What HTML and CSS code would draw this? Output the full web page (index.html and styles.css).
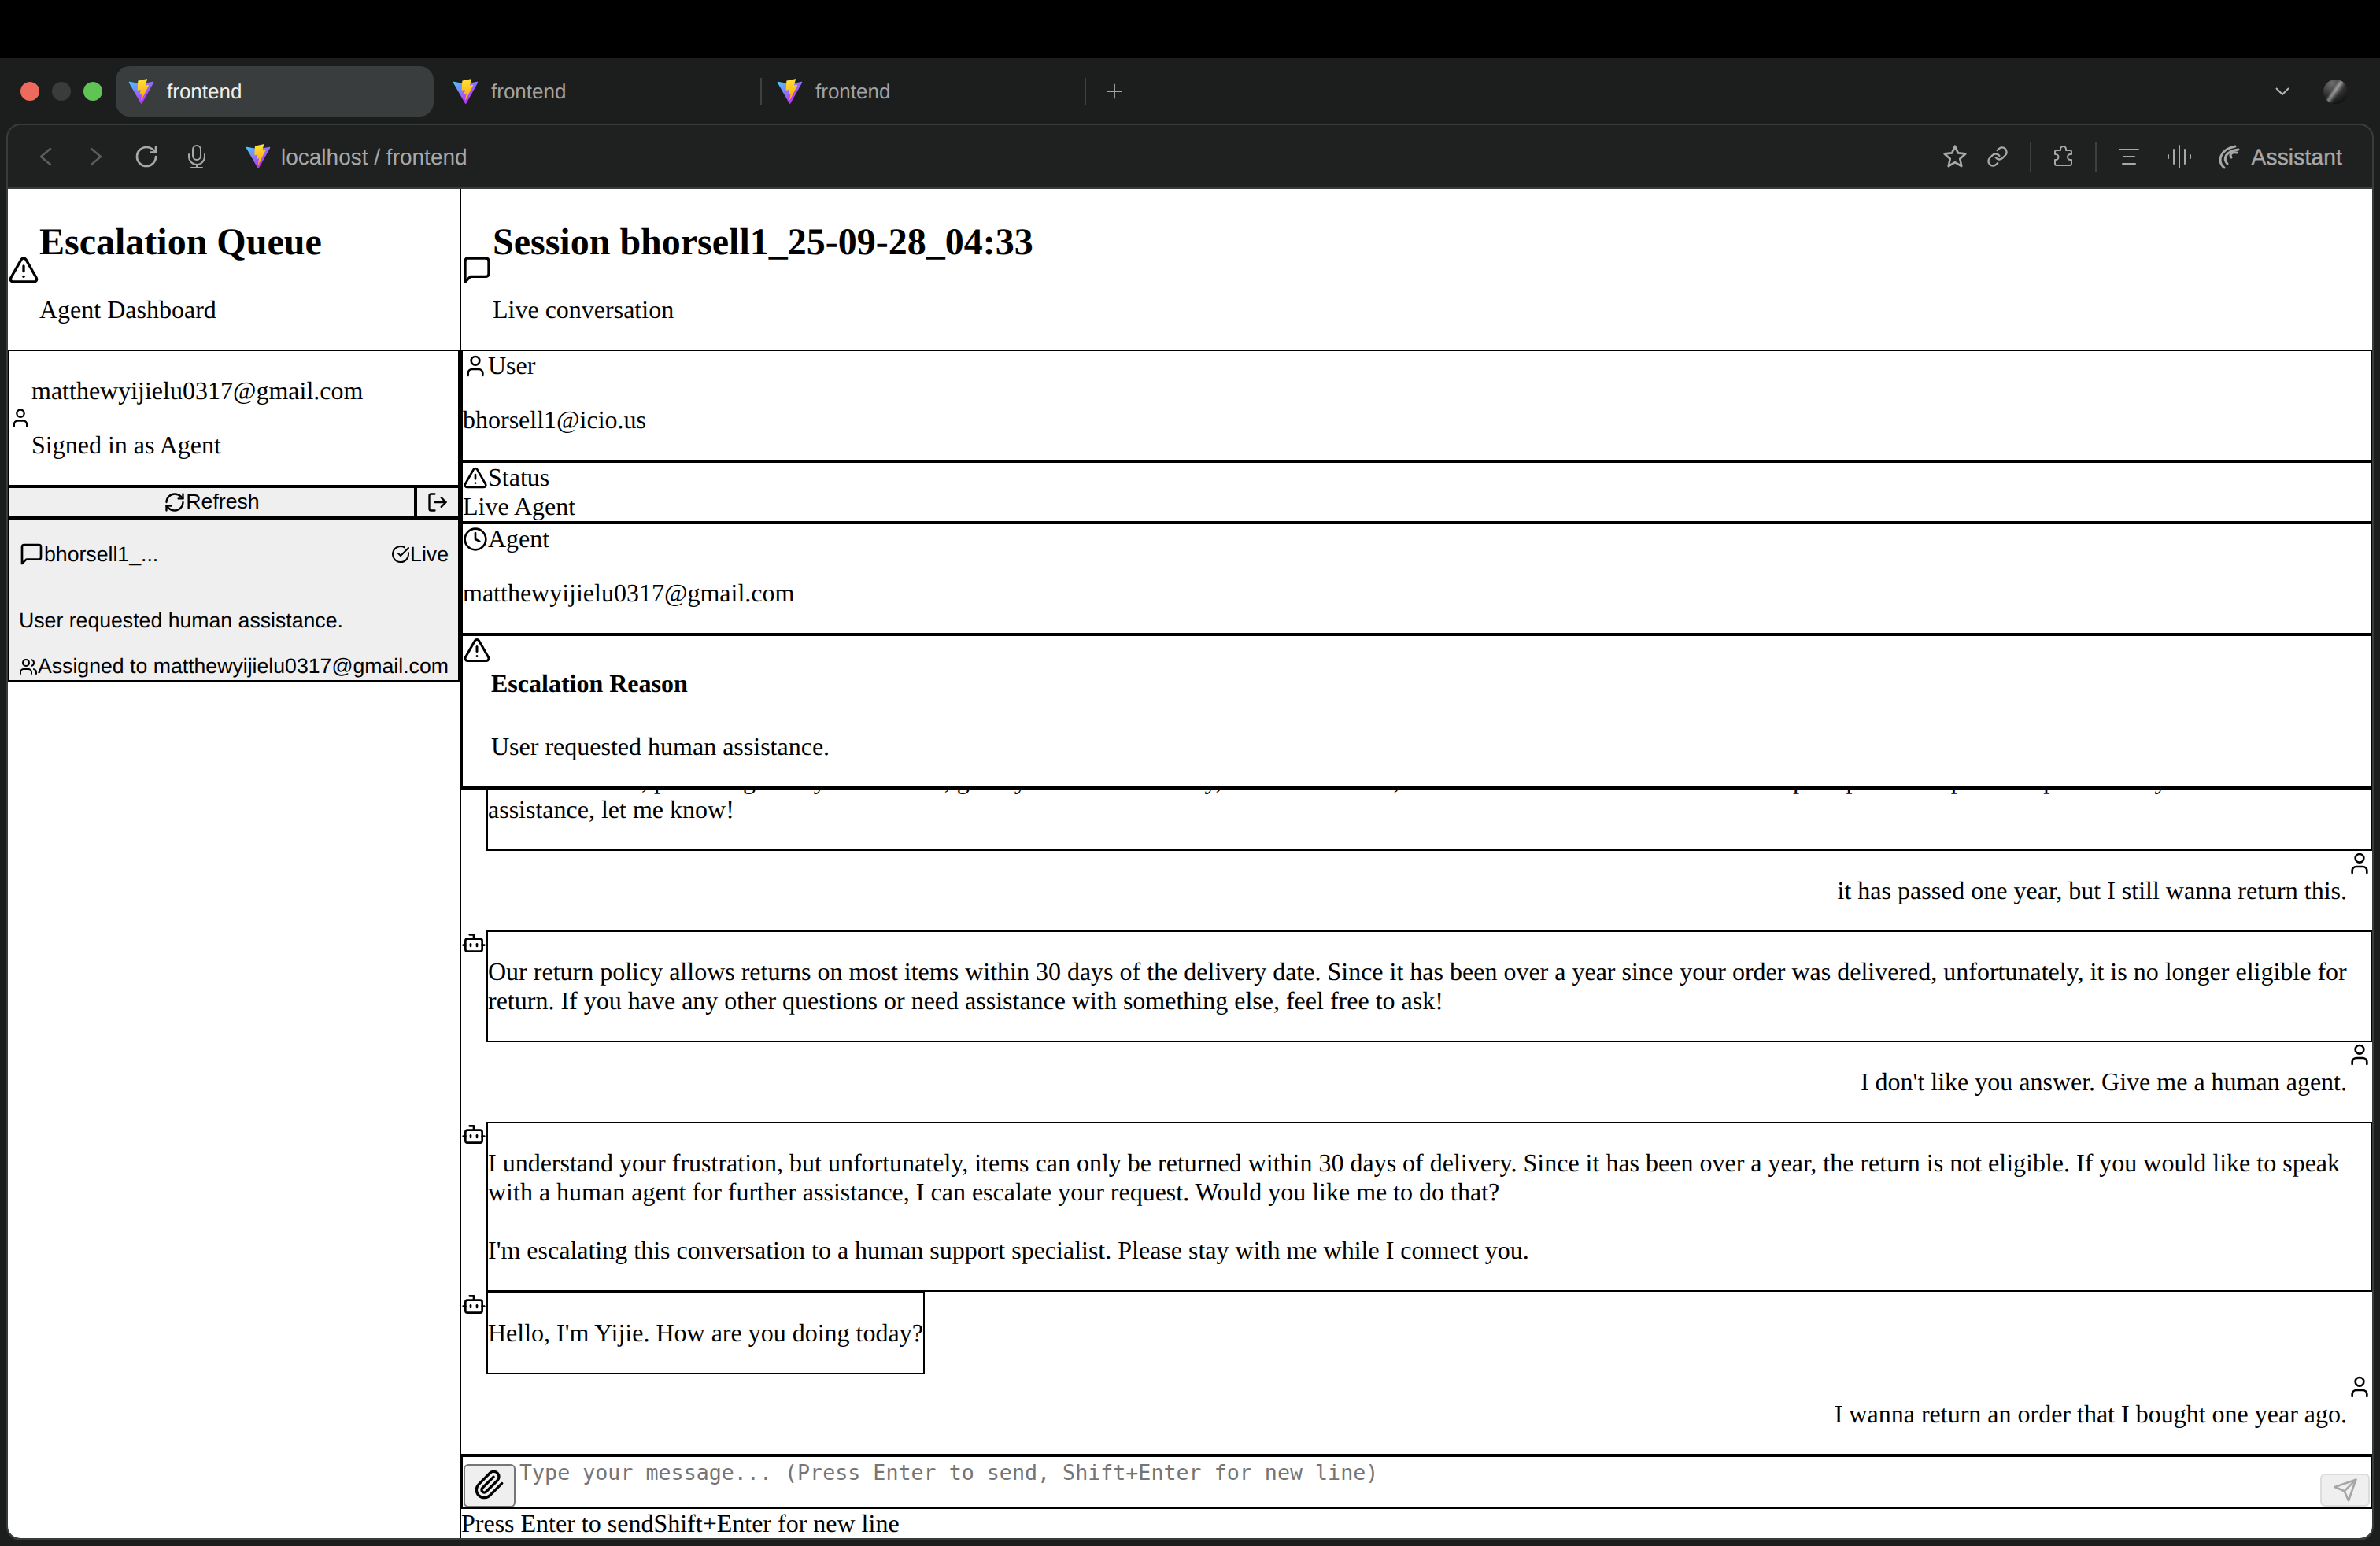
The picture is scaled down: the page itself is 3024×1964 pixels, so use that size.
FILE: index.html
```html
<!DOCTYPE html>
<html lang="en">
<head>
  <meta charset="UTF-8">
  <title>frontend</title>
  <link rel="stylesheet" href="styles.css">
</head>
<body>
  <!-- icon sprite -->
  <svg class="sprite" xmlns="http://www.w3.org/2000/svg">
    <defs>
      <linearGradient id="vite-a" gradientUnits="userSpaceOnUse" x1="6" y1="33" x2="235" y2="344">
        <stop offset="0" stop-color="#41D1FF"/><stop offset="1" stop-color="#BD34FE"/>
      </linearGradient>
      <linearGradient id="vite-b" gradientUnits="userSpaceOnUse" x1="194.65" y1="8.8" x2="236.08" y2="316.3">
        <stop offset="0" stop-color="#FFEA83"/><stop offset=".083" stop-color="#FFDD35"/><stop offset="1" stop-color="#FFA800"/>
      </linearGradient>
    </defs>
    <symbol id="i-vite" viewBox="0 0 410 404">
      <path fill="url(#vite-a)" d="M399.641 59.5246L215.643 388.545C211.844 395.338 202.084 395.378 198.228 388.618L10.5817 59.5563C6.38087 52.1896 12.6802 43.2665 21.0281 44.7586L205.223 77.6824C206.398 77.8924 207.601 77.8904 208.776 77.6763L389.119 44.8058C397.439 43.2894 403.768 52.1434 399.641 59.5246Z"/>
      <path fill="url(#vite-b)" d="M292.965 1.5744L156.801 28.2552C154.563 28.6937 152.906 30.5903 152.771 32.8664L144.395 174.33C144.198 177.662 147.258 180.248 150.51 179.498L188.42 170.749C191.967 169.931 195.172 173.055 194.443 176.622L183.18 231.775C182.422 235.487 185.907 238.661 189.532 237.56L212.947 230.446C216.577 229.344 220.065 232.527 219.297 236.242L201.398 322.875C200.278 328.294 207.486 331.249 210.492 326.603L212.5 323.5L323.454 102.072C325.312 98.3645 322.108 94.137 318.036 94.9228L279.014 102.454C275.347 103.161 272.227 99.746 273.262 96.1583L298.731 7.86689C299.767 4.27314 296.636 0.855181 292.965 1.5744Z"/>
    </symbol>
    <symbol id="i-alert" viewBox="0 0 24 24"><path d="m21.73 18-8-14a2 2 0 0 0-3.48 0l-8 14A2 2 0 0 0 4 21h16a2 2 0 0 0 1.73-3"/><path d="M12 9v4"/><path d="M12 17h.01"/></symbol>
    <symbol id="i-message" viewBox="0 0 24 24"><path d="M21 15a2 2 0 0 1-2 2H7l-4 4V5a2 2 0 0 1 2-2h14a2 2 0 0 1 2 2z"/></symbol>
    <symbol id="i-user" viewBox="0 0 24 24"><path d="M19 21v-2a4 4 0 0 0-4-4H9a4 4 0 0 0-4 4v2"/><circle cx="12" cy="7" r="4"/></symbol>
    <symbol id="i-users" viewBox="0 0 24 24"><path d="M16 21v-2a4 4 0 0 0-4-4H6a4 4 0 0 0-4 4v2"/><circle cx="9" cy="7" r="4"/><path d="M22 21v-2a4 4 0 0 0-3-3.87"/><path d="M16 3.13a4 4 0 0 1 0 7.75"/></symbol>
    <symbol id="i-clock" viewBox="0 0 24 24"><circle cx="12" cy="12" r="10"/><polyline points="12 6 12 12 16 14"/></symbol>
    <symbol id="i-refresh" viewBox="0 0 24 24"><path d="M3 12a9 9 0 0 1 9-9 9.75 9.75 0 0 1 6.74 2.74L21 8"/><path d="M21 3v5h-5"/><path d="M21 12a9 9 0 0 1-9 9 9.75 9.75 0 0 1-6.74-2.74L3 16"/><path d="M8 16H3v5"/></symbol>
    <symbol id="i-logout" viewBox="0 0 24 24"><path d="M9 21H5a2 2 0 0 1-2-2V5a2 2 0 0 1 2-2h4"/><path d="m16 17 5-5-5-5"/><path d="M21 12H9"/></symbol>
    <symbol id="i-check" viewBox="0 0 24 24"><path d="M21.801 10A10 10 0 1 1 17 3.335"/><path d="m9 11 3 3L22 4"/></symbol>
    <symbol id="i-bot" viewBox="0 0 24 24"><path d="M12 8V4H8"/><rect x="4" y="8" width="16" height="12" rx="2"/><path d="M2 14h2"/><path d="M20 14h2"/><path d="M15 13v2"/><path d="M9 13v2"/></symbol>
    <symbol id="i-clip" viewBox="0 0 24 24"><path d="m21.44 11.05-9.19 9.19a6 6 0 0 1-8.49-8.49l8.57-8.57A4 4 0 1 1 18 8.84l-8.59 8.57a2 2 0 0 1-2.83-2.83l8.49-8.48"/></symbol>
    <symbol id="i-send" viewBox="0 0 24 24"><path d="m22 2-7 20-4-9-9-4Z"/><path d="M22 2 11 13"/></symbol>
    <symbol id="i-reload" viewBox="0 0 24 24"><path d="M21 12a9 9 0 1 1-9-9c2.52 0 4.93 1 6.74 2.74L21 8"/><path d="M21 3v5h-5"/></symbol>
    <symbol id="i-star" viewBox="0 0 24 24"><path d="M12 2l2.9 6.500 7.100.8-5.300 4.700 1.500 7-6.200-3.600L5.800 21l1.500-7L2 9.300l7.100-.8z"/></symbol>
    <symbol id="i-link" viewBox="0 0 24 24"><path d="M10 13a5 5 0 0 0 7.54.54l3-3a5 5 0 0 0-7.07-7.07l-1.72 1.71"/><path d="M14 11a5 5 0 0 0-7.54-.54l-3 3a5 5 0 0 0 7.07 7.07l1.71-1.71"/></symbol>
  </svg>

  <div class="top-black"></div>

  <div class="window">
    <div class="tabstrip">
      <span class="light red"></span>
      <span class="light gray"></span>
      <span class="light green"></span>
      <div class="tab active">
        <svg class="favicon"><use href="#i-vite"/></svg>
        <span>frontend</span>
      </div>
      <span class="tab-sep hidden"></span>
      <div class="tab">
        <svg class="favicon"><use href="#i-vite"/></svg>
        <span>frontend</span>
      </div>
      <span class="tab-sep"></span>
      <div class="tab">
        <svg class="favicon"><use href="#i-vite"/></svg>
        <span>frontend</span>
      </div>
      <span class="tab-sep"></span>
      <svg class="tab-plus" viewBox="0 0 24 24"><path d="M12 2v20M2 12h20"/></svg>
      <svg class="tab-chevron" viewBox="0 0 18 10"><path d="M1 1l8 8 8-8"/></svg>
      <span class="avatar"></span>
    </div>

    <div class="frame">
      <div class="toolbar">
        <svg class="tb-icon dim" viewBox="0 0 32 32"><path d="M22 6L10 16l12 10"/></svg>
        <svg class="tb-icon dim" viewBox="0 0 32 32"><path d="M10 6l12 10-12 10"/></svg>
        <svg class="tb-icon"><use href="#i-reload"/></svg>
        <svg class="tb-icon" viewBox="0 0 32 32"><rect x="11" y="2" width="10" height="18" rx="5"/><path d="M6 13v3a10 10 0 0 0 20 0v-3"/><path d="M16 26v4M9 30h14"/></svg>
        <div class="url">
          <svg class="favicon"><use href="#i-vite"/></svg>
          <span>localhost / frontend</span>
        </div>
        <div class="tb-right">
          <svg class="tb-icon star"><use href="#i-star"/></svg>
          <svg class="tb-icon small"><use href="#i-link"/></svg>
          <span class="tb-sep"></span>
          <svg class="tb-icon puzzle" viewBox="0 0 32 32"><path d="M8 27h17a2 2 0 0 0 2-2v-5h-1.5a3.5 3.5 0 0 1 0-7H27v-3a2 2 0 0 0-2-2h-5V6.500a3.500 3.500 0 0 0-7 0V8H8a2 2 0 0 0-2 2v3h1a3.500 3.500 0 0 1 0 7H6v5a2 2 0 0 0 2 2z"/></svg>
          <span class="tb-sep"></span>
          <svg class="tb-icon" viewBox="0 0 32 32"><path d="M4 7h24M9 16h14M8 25h16"/></svg>
          <svg class="tb-icon wave" viewBox="0 0 32 32"><path d="M2 14v4M9 7v18M16 2v28M23 7v18M30 14v4"/></svg>
          <div class="assistant">
            <svg class="tb-icon thick" viewBox="0 0 32 32"><path d="M10 30C1 22 4 7 24 3"/><path d="M14 25C8 18 12 9 28 7"/><path d="M19 17c-3-4 1-7 7-6"/></svg>
            <span>Assistant</span>
          </div>
        </div>
      </div>

      <div class="page">
        <aside class="sidebar">
          <header class="head">
            <svg class="icon s40"><use href="#i-alert"/></svg>
            <div class="head-text">
              <h2>Escalation Queue</h2>
              <p>Agent Dashboard</p>
            </div>
          </header>

          <div class="signed-in">
            <svg class="icon s28"><use href="#i-user"/></svg>
            <div>
              <p>matthewyijielu0317@gmail.com</p>
              <p>Signed in as Agent</p>
            </div>
          </div>

          <div class="actions">
            <button class="btn refresh" type="button"><svg class="icon s28"><use href="#i-refresh"/></svg>Refresh</button>
            <button class="btn logout" type="button"><svg class="icon s28"><use href="#i-logout"/></svg></button>
          </div>

          <div class="queue-item">
            <div class="queue-top">
              <span class="queue-id"><svg class="icon s32"><use href="#i-message"/></svg>bhorsell1_...</span>
              <span class="queue-status"><svg class="icon s24"><use href="#i-check"/></svg>Live</span>
            </div>
            <p class="queue-reason">User requested human assistance.</p>
            <div class="queue-agent"><svg class="icon s24"><use href="#i-users"/></svg>Assigned to matthewyijielu0317@gmail.com</div>
          </div>
        </aside>

        <main class="main">
          <header class="head">
            <svg class="icon s40"><use href="#i-message"/></svg>
            <div class="head-text">
              <h2>Session bhorsell1_25-09-28_04:33</h2>
              <p>Live conversation</p>
            </div>
          </header>

          <section class="info first">
            <div class="info-label"><svg class="icon s32"><use href="#i-user"/></svg>User</div>
            <p class="info-value">bhorsell1@icio.us</p>
          </section>
          <section class="info">
            <div class="info-label"><svg class="icon s32"><use href="#i-alert"/></svg>Status</div>
            <div>Live Agent</div>
          </section>
          <section class="info">
            <div class="info-label"><svg class="icon s32"><use href="#i-clock"/></svg>Agent</div>
            <p class="info-value">matthewyijielu0317@gmail.com</p>
          </section>
          <section class="info reason">
            <svg class="icon s36"><use href="#i-alert"/></svg>
            <div>
              <h4>Escalation Reason</h4>
              <p>User requested human assistance.</p>
            </div>
          </section>

          <div class="messages">
            <div class="msg bot">
              <svg class="icon s32"><use href="#i-bot"/></svg>
              <div class="bubble"><p>To return items, please log in to your account, go to your Orders History, choose the order, and click Return Items and follow the prompts to complete the process. If you need further assistance, let me know!</p></div>
            </div>
            <div class="msg user">
              <p>it has passed one year, but I still wanna return this.</p>
              <svg class="icon s32"><use href="#i-user"/></svg>
            </div>
            <div class="msg bot">
              <svg class="icon s32"><use href="#i-bot"/></svg>
              <div class="bubble"><p>Our return policy allows returns on most items within 30 days of the delivery date. Since it has been over a year since your order was delivered, unfortunately, it is no longer eligible for return. If you have any other questions or need assistance with something else, feel free to ask!</p></div>
            </div>
            <div class="msg user">
              <p>I don't like you answer. Give me a human agent.</p>
              <svg class="icon s32"><use href="#i-user"/></svg>
            </div>
            <div class="msg bot">
              <svg class="icon s32"><use href="#i-bot"/></svg>
              <div class="bubble"><p>I understand your frustration, but unfortunately, items can only be returned within 30 days of delivery. Since it has been over a year, the return is not eligible. If you would like to speak with a human agent for further assistance, I can escalate your request. Would you like me to do that?<br><br>I'm escalating this conversation to a human support specialist. Please stay with me while I connect you.</p></div>
            </div>
            <div class="msg bot">
              <svg class="icon s32"><use href="#i-bot"/></svg>
              <div class="bubble fit"><p>Hello, I'm Yijie. How are you doing today?</p></div>
            </div>
            <div class="msg user">
              <p>I wanna return an order that I bought one year ago.</p>
              <svg class="icon s32"><use href="#i-user"/></svg>
            </div>
          </div>

          <div class="composer">
            <button class="btn attach" type="button"><svg class="icon s40"><use href="#i-clip"/></svg></button>
            <textarea class="composer-input" rows="1" placeholder="Type your message... (Press Enter to send, Shift+Enter for new line)"></textarea>
            <button class="btn send" type="button" disabled><svg class="icon s32"><use href="#i-send"/></svg></button>
          </div>
          <div class="hint"><span>Press Enter to send</span><span>Shift+Enter for new line</span></div>
        </main>
      </div>
    </div>
  </div>
</body>
</html>
```

FILE: styles.css
```css
* { box-sizing: border-box; }

html, body { height: 100%; }

body {
  margin: 0;
  background: #000;
  overflow: hidden;
  font-family: "Liberation Serif", serif;
  font-size: 32px;
  line-height: 37px;
  color: #000;
  text-rendering: geometricPrecision;
}

.sprite { display: block; width: 0; height: 0; }

.top-black { height: 74px; }

/* Browser chrome */
.window {
  height: 1890px;
  background: #1c1e1e;
}

.tabstrip {
  display: flex;
  align-items: center;
  height: 83px;
  padding: 1px 41px 0 26px;
  color: #a3a3a3;
  font-family: "Liberation Sans", sans-serif;
  font-size: 26px;
}

.light { width: 24px; height: 24px; border-radius: 50%; margin-right: 16px; }
.light.red { background: #ec6a5e; }
.light.gray { background: #3a3c3c; }
.light.green { background: #5fc454; margin-right: 17px; }

.tab {
  display: flex;
  align-items: center;
  gap: 16px;
  width: 404px;
  height: 64px;
  padding: 0 16px;
  border-radius: 18px;
}

.tab.active { background: #3a3d3e; color: #ededed; }

.favicon { width: 33px; height: 33px; flex: none; }

.tab-sep { width: 2px; height: 34px; margin: 0 3px; background: #3f4141; }
.tab-sep.hidden { background: transparent; }

.tab-plus {
  width: 22px;
  height: 22px;
  margin-left: 22px;
  fill: none;
  stroke: #a3a3a3;
  stroke-width: 2;
}

.tab-chevron {
  width: 18px;
  height: 10px;
  margin-left: auto;
  fill: none;
  stroke: #b5b5b5;
  stroke-width: 2;
}

.avatar {
  width: 31px;
  height: 31px;
  margin-left: 43px;
  border-radius: 50%;
  background:
    linear-gradient(125deg, transparent 38%, rgba(255, 255, 255, .45) 47%, rgba(255, 255, 255, .08) 58%, transparent 64%),
    radial-gradient(circle at 35% 15%, #6e6e6e, #2a2a2a 55%, #050505 95%);
}

.frame {
  display: flex;
  flex-direction: column;
  height: 1800px;
  margin: 0 8px;
  background: #1f2121;
  border: 2px solid #3a3c3c;
  border-bottom-width: 3px;
  border-radius: 18px;
  overflow: hidden;
}

.toolbar {
  display: flex;
  align-items: center;
  gap: 32px;
  height: 81px;
  padding: 1px 38px 0 32px;
  border-bottom: 2px solid #3a3c3c;
  color: #a8a8a8;
  font-family: "Liberation Sans", sans-serif;
  font-size: 28px;
}

.tb-icon {
  width: 32px;
  height: 32px;
  flex: none;
  fill: none;
  stroke: #a8a8a8;
  stroke-width: 2;
  stroke-linecap: round;
  stroke-linejoin: round;
}

.tb-icon.dim { stroke: #5c5e5e; stroke-width: 2.500; }
.tb-icon.small { width: 28px; height: 28px; margin: 0 2px; }
.tb-icon.thick { stroke-width: 3; }
.tb-icon.wave { margin-left: 7px; }
.tb-icon.star { margin-right: -3px; }
.tb-icon.puzzle { margin-left: -1px; }

.url {
  display: flex;
  align-items: center;
  gap: 13px;
  margin-left: 14px;
}

.url .favicon { width: 32px; height: 32px; }

.tb-right {
  display: flex;
  align-items: center;
  gap: 25px;
  margin-left: auto;
}

.tb-sep { width: 2px; height: 39px; background: #3f4141; }

.assistant {
  display: flex;
  align-items: center;
  gap: 13px;
  margin-left: 6px;
  letter-spacing: .2px;
  -webkit-text-stroke: .4px #a8a8a8;
}

/* Page */
.page {
  display: flex;
  flex: 1;
  min-height: 0;
  background: #fff;
}

.sidebar {
  display: flex;
  flex-direction: column;
  flex: none;
  width: 576px;
  border-right: 2px solid #000;
}

.main {
  display: flex;
  flex-direction: column;
  flex: 1;
  min-width: 0;
}

.icon {
  flex: none;
  fill: none;
  stroke: currentColor;
  stroke-width: 2;
  stroke-linecap: round;
  stroke-linejoin: round;
}

.s24 { width: 24px; height: 24px; }
.s28 { width: 28px; height: 28px; }
.s32 { width: 32px; height: 32px; }
.s36 { width: 36px; height: 36px; }
.s40 { width: 40px; height: 40px; }

p { margin: 0; }

.head {
  display: flex;
  align-items: center;
  flex: none;
  height: 206px;
  padding-top: 2px;
  border-bottom: 2px solid #000;
}

.head-text { margin-top: 7px; }

.head h2 {
  margin: 0 0 40px;
  font-size: 48px;
  line-height: 54px;
}

.signed-in {
  display: flex;
  align-items: center;
  padding: 32px 0;
  border: 2px solid #000;
  border-width: 0 2px 2px;
}

.signed-in p + p { margin-top: 32px; }

.actions {
  display: flex;
  border: 2px solid #000;
  border-width: 2px 2px;
}

.btn {
  display: flex;
  align-items: center;
  justify-content: center;
  padding: 0;
  background: #efefef;
  color: #000;
  font-family: "Liberation Sans", sans-serif;
  font-size: 26.67px;
  line-height: 31px;
}

.refresh {
  flex: 1;
  height: 37px;
  border: 2px solid #000;
  border-width: 0 2px 2px 0;
}

.logout {
  width: 54px;
  height: 37px;
  border: 2px solid #000;
  border-width: 0 0 2px 2px;
}

.queue-item {
  padding: 27px 12px 2px;
  border: 2px solid #000;
  border-top-width: 2px;
  background: #efefef;
  font-family: "Liberation Sans", sans-serif;
  font-size: 26.67px;
  line-height: 31px;
}

.queue-top {
  display: flex;
  align-items: center;
  justify-content: space-between;
}

.queue-id,
.queue-status,
.queue-agent {
  display: flex;
  align-items: center;
}

.queue-reason { margin: 53px 0 27px; }

.info {
  flex: none;
  border: 2px solid #000;
}

.info.first { border-top: 0; }

.info-label {
  display: flex;
  align-items: center;
}

.info-value { margin: 32px 0; }

.info.reason {
  display: flex;
  align-items: flex-start;
  border-bottom-width: 4px;
}

.reason h4 {
  margin: 42px 0 43px;
  font-size: 32px;
}

.reason p { margin-bottom: 32px; }

.messages {
  display: flex;
  flex-direction: column;
  justify-content: flex-end;
  flex: 1;
  min-height: 0;
  overflow: hidden;
}

.msg {
  display: flex;
  flex: none;
  align-items: flex-start;
}

.msg.user { justify-content: flex-end; }
.msg.user p { margin: 32px 0; }

.bubble {
  flex: 1;
  padding: 32px 0;
  border: 2px solid #000;
}

.bubble.fit { flex: none; }

.composer {
  display: flex;
  align-items: flex-end;
  flex: none;
  height: 70px;
  border: 2px solid #000;
  border-top-width: 4px;
}

.attach {
  flex: none;
  width: 66px;
  height: 55px;
  margin-left: 1px;
  padding-bottom: 4px;
  border: 2px solid #767676;
  border-radius: 6px;
}

.composer-input {
  flex: 1;
  align-self: flex-start;
  height: 60px;
  padding: 4px 5px 0;
  border: 0;
  outline: 0;
  resize: none;
  background: transparent;
  font-family: "DejaVu Sans Mono", monospace;
  font-size: 26.67px;
  line-height: 31px;
}

.composer-input::placeholder { color: #757575; }

.send {
  flex: none;
  width: 63px;
  height: 42px;
  margin: 0 1px 1px 0;
  border: 2px solid #dcdcdc;
  border-radius: 6px;
  color: #a6a6a6;
}

.hint {
  display: flex;
  flex: none;
  height: 37px;
}
```
